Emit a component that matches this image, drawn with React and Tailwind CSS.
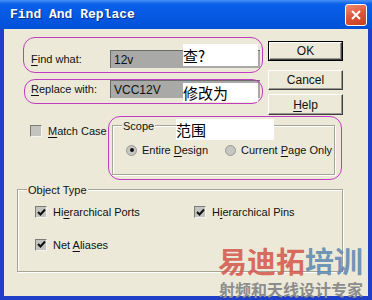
import React from 'react';

const sans = { fontFamily: '"Liberation Sans", Arial, sans-serif' };
const cjk = { fontFamily: '"Noto Sans CJK SC", sans-serif' };

function U({ children }) {
    return <span className="underline underline-offset-[2px]">{children}</span>;
}

function Check({ checked }) {
    return (
        <span className="w-[12px] h-[12px] shrink-0 bg-[#c3c3c0] border border-t-[#7c7c78] border-l-[#7c7c78] border-b-[#f4f4f0] border-r-[#f4f4f0] flex items-center justify-center">
            {checked && (
                <svg width="9" height="9" viewBox="0 0 9 9">
                    <path d="M1 4 L3.5 6.5 L8 1.5" stroke="#111" strokeWidth="2" fill="none" />
                </svg>
            )}
        </span>
    );
}

function Radio({ on }) {
    return (
        <span className="w-[11px] h-[11px] shrink-0 rounded-full bg-[#c6c6c2] border border-[#9a9a96] flex items-center justify-center">
            {on && <span className="w-[4px] h-[4px] rounded-full bg-[#111]" />}
        </span>
    );
}

function Btn({ children, def, className = '' }) {
    return (
        <div className={`${def ? 'border border-black' : ''} ${className}`}>
            <div className="h-full w-full bg-[#ece9d8] border border-t-white border-l-white border-b-[#404040] border-r-[#404040] shadow-[inset_-1px_-1px_0_#9a9890] flex items-center justify-center text-[12px] text-[#111]">
                {children}
            </div>
        </div>
    );
}

function Field({ label, value }) {
    return (
        <div className="flex items-center h-[18px]">
            <div className="w-[79px] text-[11px] text-[#111]">{label}</div>
            <div className="w-[150px] h-[18px] bg-[#a9a9a7] border-t border-l border-[#6c6c6a] pl-[3px] text-[12px] text-[#111] flex items-center">{value}</div>
        </div>
    );
}

export default function App() {
    return (
        <div className="w-[372px] h-[300px] bg-[#1f3fc8] flex flex-col overflow-hidden relative" style={sans}>
            <div className="h-[29px] shrink-0 flex items-center pl-[10px] pr-[5px] bg-[linear-gradient(180deg,#4a90f5_0%,#0a60ea_14%,#0458e2_60%,#0250d6_100%)]">
                <span className="text-white font-bold text-[13px] [text-shadow:1px_1px_0_#0c2a80]" style={{ fontFamily: '"Liberation Mono", "Courier New", monospace' }}>Find And Replace</span>
                <div className="ml-auto w-[22px] h-[22px] rounded-[3px] border border-white bg-[linear-gradient(160deg,#f08a6c_0%,#dc5236_55%,#c8401f_100%)] flex items-center justify-center">
                    <svg width="12" height="12" viewBox="0 0 12 12">
                        <path d="M2 2 L10 10 M10 2 L2 10" stroke="white" strokeWidth="2" />
                    </svg>
                </div>
            </div>

            <div className="flex-1 mx-[4px] mb-[4px] bg-[#ece9d8] pl-[13px] pr-[25px] pt-[12px] relative">
                <div className="flex justify-between h-[74px]">
                    <div className="pl-[14px] pt-[9px] flex flex-col gap-[12px]">
                        <Field label={<><U>F</U>ind what:</>} value="12v" />
                        <Field label={<><U>R</U>eplace with:</>} value="VCC12V" />
                    </div>
                    <div className="w-[75px] flex flex-col">
                        <Btn def className="h-[20px]">OK</Btn>
                        <Btn className="h-[20px] mt-[9px]">Cancel</Btn>
                        <Btn className="h-[21px] mt-[4px]"><span><U>H</U>elp</span></Btn>
                    </div>
                </div>

                <div className="flex mt-[8px] h-[52px]">
                    <div className="w-[95px] pl-[13px] flex items-start">
                        <div className="flex items-center gap-[6px]">
                            <Check />
                            <span className="text-[11px] text-[#111]"><U>M</U>atch Case</span>
                        </div>
                    </div>
                    <div className="relative w-[223px] h-[50px] mt-[2px] border border-[#a5a496] shadow-[inset_1px_1px_0_#fff,1px_1px_0_#fff]">
                        <span className="absolute left-[9px] top-[-8px] px-[1px] bg-[#ece9d8] text-[11px] text-[#111]">Scope</span>
                        <div className="flex items-center pl-[13px] pt-[16px]">
                            <div className="w-[99px] flex items-center gap-[5px]">
                                <Radio on />
                                <span className="text-[11px] text-[#111]">Entire <U>D</U>esign</span>
                            </div>
                            <div className="flex items-center gap-[5px]">
                                <Radio />
                                <span className="text-[11px] text-[#111]">Current <U>P</U>age Only</span>
                            </div>
                        </div>
                    </div>
                </div>

                <div className="relative mt-[14px] h-[83px] border border-[#a5a496] shadow-[inset_1px_1px_0_#fff,1px_1px_0_#fff]">
                    <span className="absolute left-[9px] top-[-8px] px-[1px] bg-[#ece9d8] text-[11px] text-[#111]">Object Type</span>
                    <div className="grid grid-cols-[159px_1fr] gap-y-[16px] pl-[17px] pt-[14px]">
                        <div className="flex items-center gap-[6px]">
                            <Check checked />
                            <span className="text-[11px] text-[#111]">Hi<U>e</U>rarchical Ports</span>
                        </div>
                        <div className="flex items-center gap-[6px]">
                            <Check checked />
                            <span className="text-[11px] text-[#111]">H<U>i</U>erarchical Pins</span>
                        </div>
                        <div className="flex items-center gap-[6px]">
                            <Check checked />
                            <span className="text-[11px] text-[#111]">Net <U>A</U>liases</span>
                        </div>
                    </div>
                </div>
            </div>

            {/* annotations drawn over the dialog */}
            <div className="absolute left-[23px] top-[37px] w-[240px] h-[36px] rounded-[12px] border-[1.5px] border-[#c03cc0]" />
            <div className="absolute left-[24px] top-[79px] w-[239px] h-[25px] rounded-[11px] border-[1.5px] border-[#c03cc0]" />
            <div className="absolute left-[108px] top-[116px] w-[234px] h-[64px] rounded-[12px] border-[1.5px] border-[#c03cc0]" />

            <div className="absolute left-[183px] top-[44px] w-[75px] h-[22px] bg-white flex items-center text-[15px] text-black leading-none" style={cjk}>查?</div>
            <div className="absolute left-[183px] top-[83px] w-[75px] h-[19px] bg-white flex items-center text-[15px] text-black leading-none" style={cjk}>修改为</div>
            <div className="absolute left-[176px] top-[119px] w-[98px] h-[21px] bg-white flex items-center text-[15px] text-black leading-none" style={cjk}>范围</div>

            {/* watermark */}
            <div className="absolute left-[218px] top-[243px] text-[29px] font-bold leading-[34px] whitespace-nowrap" style={cjk}>
                <span className="text-[#d45a4e]/90">易迪拓</span><span className="text-[#5f8ab0]/90">培训</span>
            </div>
            <div className="absolute left-[219px] top-[280px] text-[16px] font-bold leading-[18px] text-[#8c8c8c] whitespace-nowrap" style={cjk}>射频和天线设计专家</div>
        </div>
    );
}
